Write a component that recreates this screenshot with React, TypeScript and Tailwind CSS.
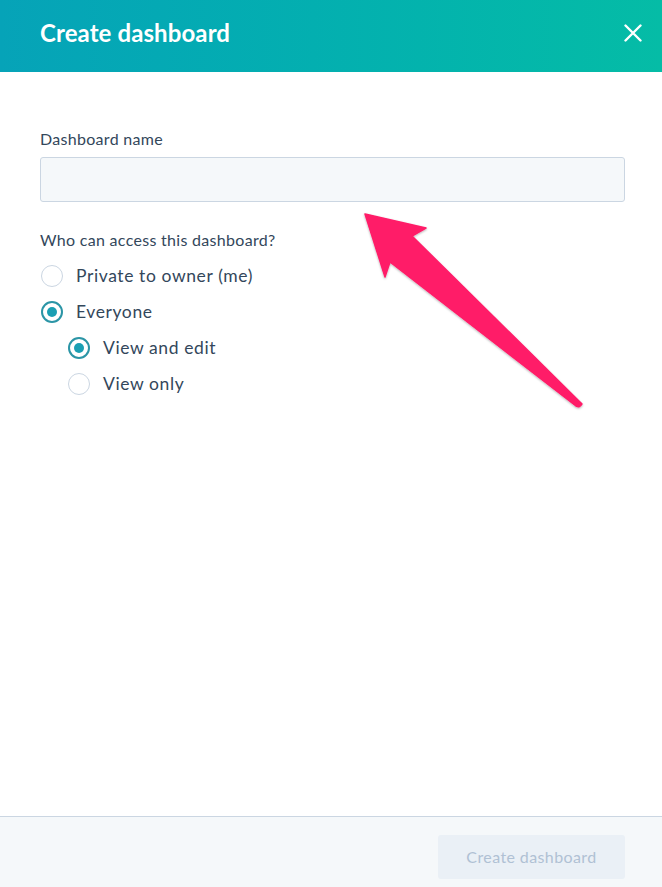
export default function App() {
  const options = [
    { label: "Private to owner (me)", checked: false, nested: false },
    { label: "Everyone", checked: true, nested: false },
    { label: "View and edit", checked: true, nested: true },
    { label: "View only", checked: false, nested: true },
  ];

  return (
    <div className="relative flex h-[887px] w-[662px] flex-col bg-white font-['Lato',sans-serif] text-[#33475b]">
      {/* header */}
      <div className="flex h-[72px] shrink-0 items-center justify-between bg-gradient-to-r from-[#06a3b8] to-[#05bca6] pb-[6px] pl-10 pr-5">
        <h1 className="text-[24px] font-bold tracking-[0.1px] text-white">Create dashboard</h1>
        <button className="flex h-[18px] w-[18px] items-center justify-center">
          <svg width="18" height="18" viewBox="0 0 18 18">
            <path d="M1.5 1.5 L16.5 16.5 M16.5 1.5 L1.5 16.5" stroke="white" strokeWidth="2.4" strokeLinecap="round" />
          </svg>
        </button>
      </div>

      {/* body */}
      <div className="flex flex-1 flex-col px-10 pt-[58px]">
        <label className="text-[16px] leading-[18px] tracking-[0.3px] text-[#33475b]">Dashboard name</label>
        <input className="mt-[9px] h-[45px] w-[585px] rounded-[3px] border border-[#cbd6e2] bg-[#f5f8fa] px-3 text-[15px] outline-none" />

        <p className="mt-[29px] text-[16px] leading-[18px] tracking-[0.3px]">Who can access this dashboard?</p>
        <div className="mt-[9px] flex flex-col">
          {options.map((o, i) => (
            <div key={i} className={`flex h-9 items-center gap-[13px] ${o.nested ? "pl-[28px]" : "pl-px"}`}>
              {o.checked ? (
                <span className="flex h-[22px] w-[22px] items-center justify-center rounded-full border-2 border-[#2b95a6] bg-white">
                  <span className="h-[10px] w-[10px] rounded-full bg-[#1a9fb3]" />
                </span>
              ) : (
                <span className="h-[22px] w-[22px] rounded-full border border-[#cbd6e2] bg-white" />
              )}
              <span className="text-[17.5px] tracking-[0.6px] text-[#33475b]">{o.label}</span>
            </div>
          ))}
        </div>
      </div>

      {/* footer */}
      <div className="flex h-[71px] shrink-0 items-center justify-end border-t border-[#cbd6e2] bg-[#f5f8fa] pr-[37px] pt-[10px]">
        <button className="h-[44px] w-[187px] rounded-[3px] bg-[#eaf0f6] text-[16px] tracking-[0.4px] text-[#b0c1d4]">Create dashboard</button>
      </div>

      {/* annotation arrow */}
      <svg className="pointer-events-none absolute left-0 top-0" width="662" height="887" viewBox="0 0 662 887">
        <defs>
          <filter id="sh" x="-20%" y="-20%" width="140%" height="140%">
            <feDropShadow dx="0" dy="1" stdDeviation="1.2" floodColor="#000" floodOpacity="0.3" />
          </filter>
        </defs>
        <path
          d="M365 214 L426 228 L412 236 L582 404 Q580 408 576 406 L390 262 L385 277 Z"
          fill="#ff1b68"
          stroke="#ff1b68"
          strokeWidth="1.5"
          strokeLinejoin="round"
          filter="url(#sh)"
        />
      </svg>
    </div>
  );
}
